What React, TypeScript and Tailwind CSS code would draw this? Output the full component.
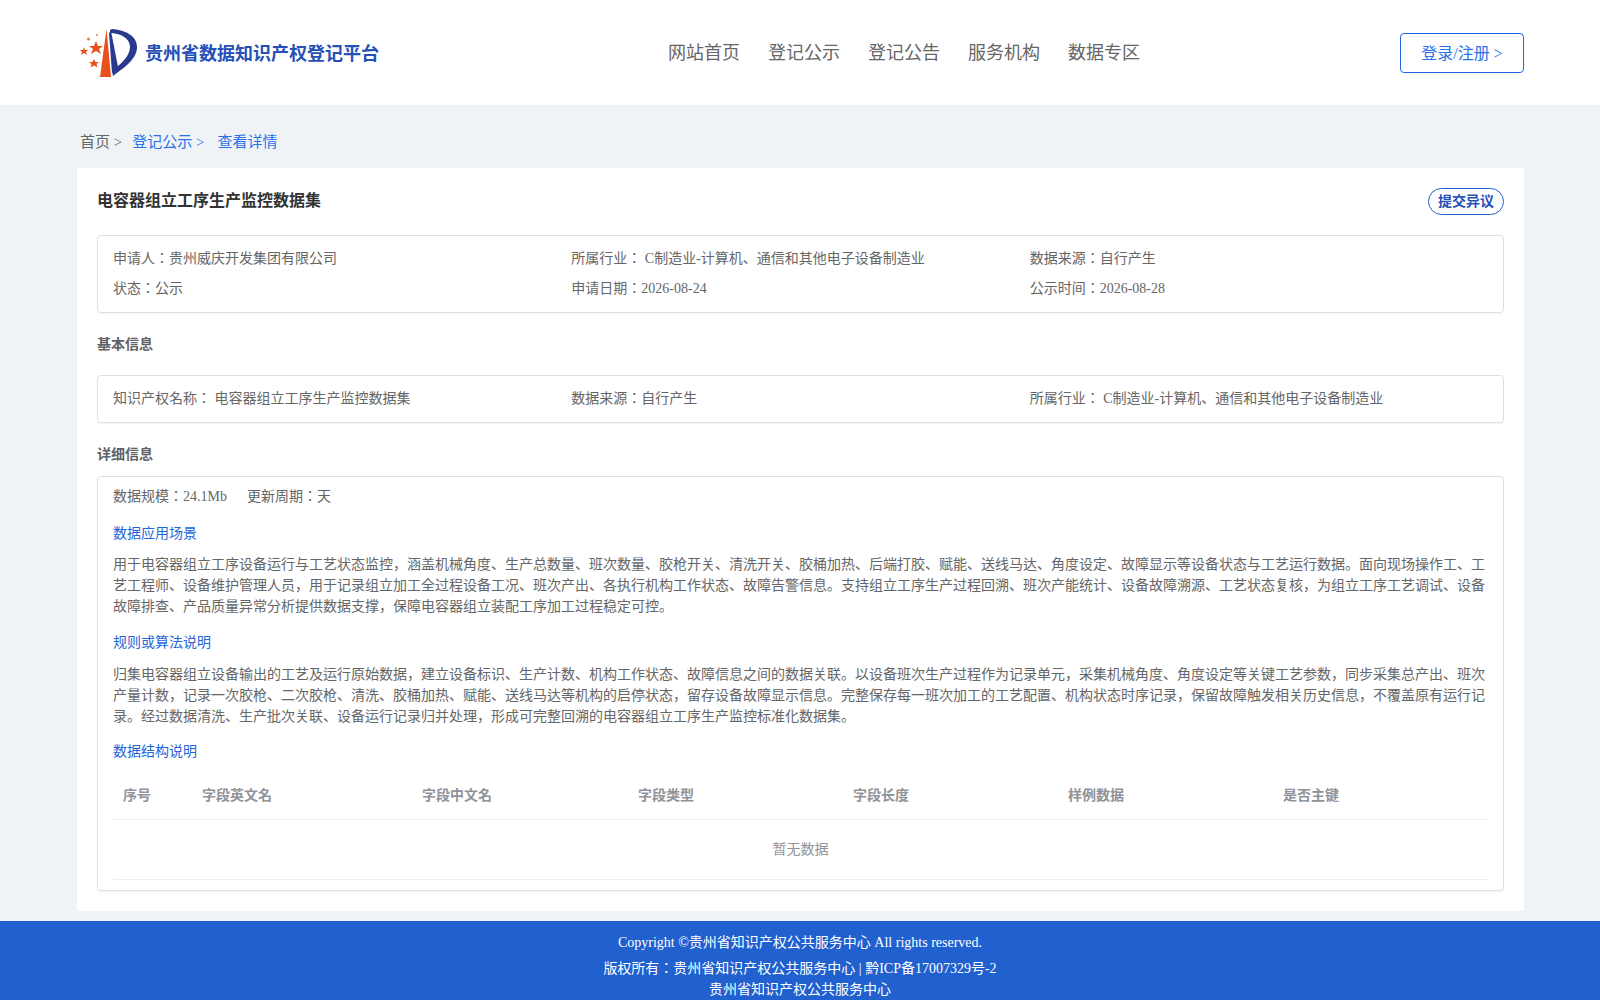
const F = "[font-family:'Liberation_Serif','Noto_Sans_CJK_JP',serif]";

function Logo() {
  return (
    <svg width="60" height="52" viewBox="0 0 60 52" className="shrink-0">
      <path d="M26.5 2 L31 50 L20 50 Z" fill="#e8501e" />
      <path d="M30 3 L32 2 C44 3 57 8 57 20 C57 33 42 42 33 49 L32 44 C41 37 50 29 50 20 C50 11 40 6 30 6 Z" fill="#2b3a8f" />
      <path d="M29 6 L32 46 L38 40 L31 4 Z" fill="#2b3a8f" />
      <polygon points="16,14 18,19 23,19 19,22 21,27 16,24 11,27 13,22 9,19 14,19" fill="#e8501e" />
      <polygon points="4,20 5,23 8,23 6,25 7,28 4,26 1,28 2,25 0,23 3,23" fill="#e8501e" />
      <polygon points="14,32 15.500,35 19,35 16.500,37 17.500,40.500 14,38.500 10.500,40.500 11.500,37 9,35 12.500,35" fill="#e8501e" />
      <circle cx="8.500" cy="12" r="1.500" fill="#ee7a50" />
      <circle cx="17" cy="8" r="1" fill="#ee7a50" />
    </svg>
  );
}

function Cell({ label, value }: { label: string; value: string }) {
  return <div>{label}{value}</div>;
}

export default function App() {
  return (
    <div className={`${F} min-h-[1000px] bg-[#eff3f6] text-sm text-[#666]`}>
      <header className="flex h-[105px] items-start bg-white pl-[80px] pr-[76px]">
        <div className="mt-[27px] flex w-[532px] items-center">
          <Logo />
          <span className="ml-[5px] mt-[2px] text-[18px] font-bold leading-[28px] text-[#2450b8]">贵州省数据知识产权登记平台</span>
        </div>
        <nav className="mt-[38px] flex gap-[28px] pl-[56px] text-[18px] leading-[30px] text-[#666]">
          <a>网站首页</a>
          <a>登记公示</a>
          <a>登记公告</a>
          <a>服务机构</a>
          <a>数据专区</a>
        </nav>
        <button className="mt-[33px] ml-auto h-[40px] w-[124px] rounded border border-[#1f66e0] pt-px text-base text-[#2a72ea]">登录/注册 &gt;</button>
      </header>

      <div className="flex h-[63px] items-center pt-[10px] pl-[80px] text-[15px] leading-[20px]">
        <span className="mr-[10px]">首页 &gt;</span>
        <span className="mr-[13px] text-[#2a72ea]">登记公示 &gt;</span>
        <span className="text-[#2a72ea]">查看详情</span>
      </div>

      <main className="ml-[77px] mr-[76px] h-[743px] bg-white px-5 pt-5">
        <div className="flex h-[47px] items-start justify-between">
          <h1 className="mt-px text-base font-bold leading-6 text-[#333]">电容器组立工序生产监控数据集</h1>
          <button className="h-[27px] w-[76px] rounded-[14px] border border-[#1f5fcf] text-sm font-bold text-[#2450b8]">提交异议</button>
        </div>

        <section className="grid h-[78px] grid-cols-3 content-center rounded border border-[#dcdfe6] px-[15px] leading-[30px] shadow-[0_1px_2px_rgba(0,0,0,0.05)]">
          <Cell label="申请人：" value="贵州威庆开发集团有限公司" />
          <Cell label="所属行业： " value="C制造业-计算机、通信和其他电子设备制造业" />
          <Cell label="数据来源：" value="自行产生" />
          <Cell label="状态：" value="公示" />
          <Cell label="申请日期：" value="2026-08-24" />
          <Cell label="公示时间：" value="2026-08-28" />
        </section>

        <h2 className="mt-[22px] text-sm font-bold leading-5 text-[#606266]">基本信息</h2>

        <section className="mt-[20px] grid h-[48px] grid-cols-3 content-center rounded border border-[#dcdfe6] px-[15px] leading-[46px] shadow-[0_1px_2px_rgba(0,0,0,0.05)]">
          <Cell label="知识产权名称： " value="电容器组立工序生产监控数据集" />
          <Cell label="数据来源：" value="自行产生" />
          <Cell label="所属行业： " value="C制造业-计算机、通信和其他电子设备制造业" />
        </section>

        <h2 className="mt-[22px] text-sm font-bold leading-5 text-[#606266]">详细信息</h2>

        <section className="mt-[11px] h-[415px] rounded border border-[#dcdfe6] px-[15px] shadow-[0_1px_2px_rgba(0,0,0,0.05)]">
          <div className="flex h-[45px] items-start gap-5 pt-[10px] leading-5">
            <span>数据规模：24.1Mb</span>
            <span>更新周期：天</span>
          </div>

          <h3 className="mt-[2px] leading-5 text-[#1f66d8]">数据应用场景</h3>
          <p className="mt-[10px] leading-[21px]">用于电容器组立工序设备运行与工艺状态监控，涵盖机械角度、生产总数量、班次数量、胶枪开关、清洗开关、胶桶加热、后端打胶、赋能、送线马达、角度设定、故障显示等设备状态与工艺运行数据。面向现场操作工、工艺工程师、设备维护管理人员，用于记录组立加工全过程设备工况、班次产出、各执行机构工作状态、故障告警信息。支持组立工序生产过程回溯、班次产能统计、设备故障溯源、工艺状态复核，为组立工序工艺调试、设备故障排查、产品质量异常分析提供数据支撑，保障电容器组立装配工序加工过程稳定可控。</p>

          <h3 className="mt-[16px] leading-5 text-[#1f66d8]">规则或算法说明</h3>
          <p className="mt-[11px] leading-[21px]">归集电容器组立设备输出的工艺及运行原始数据，建立设备标识、生产计数、机构工作状态、故障信息之间的数据关联。以设备班次生产过程作为记录单元，采集机械角度、角度设定等关键工艺参数，同步采集总产出、班次产量计数，记录一次胶枪、二次胶枪、清洗、胶桶加热、赋能、送线马达等机构的启停状态，留存设备故障显示信息。完整保存每一班次加工的工艺配置、机构状态时序记录，保留故障触发相关历史信息，不覆盖原有运行记录。经过数据清洗、生产批次关联、设备运行记录归并处理，形成可完整回溯的电容器组立工序生产监控标准化数据集。</p>

          <h3 className="mt-[15px] leading-5 text-[#1f66d8]">数据结构说明</h3>

          <div className="mt-[10px] grid h-[48px] grid-cols-[79px_220px_216px_repeat(4,215px)] items-center border-b border-[#ebeef5] font-bold text-[#909399]">
            <div className="pl-[10px]">序号</div>
            <div className="pl-[10px]">字段英文名</div>
            <div className="pl-[10px]">字段中文名</div>
            <div className="pl-[10px]">字段类型</div>
            <div className="pl-[10px]">字段长度</div>
            <div className="pl-[10px]">样例数据</div>
            <div className="pl-[10px]">是否主键</div>
          </div>
          <div className="flex h-[60px] items-center justify-center border-b border-[#ebeef5] text-[#909399]">暂无数据</div>
        </section>
      </main>

      <footer className="mt-[10px] flex h-[79px] flex-col items-center overflow-hidden bg-[#2060cf] pt-[12px] text-white">
        <div className="leading-5">Copyright ©贵州省知识产权公共服务中心 All rights reserved.</div>
        <div className="mt-[5px] leading-[21px]">版权所有：贵州省知识产权公共服务中心 | 黔ICP备17007329号-2</div>
        <div className="leading-[21px]">贵州省知识产权公共服务中心</div>
      </footer>
    </div>
  );
}
